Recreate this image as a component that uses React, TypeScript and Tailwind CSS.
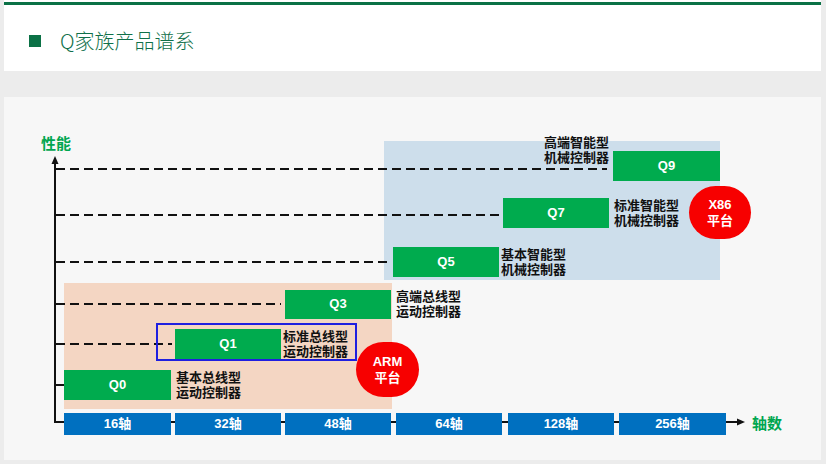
type Row = {
  name: string;
  row: string;
  dash: string;
  bar: string;
  note: string;
  line1: string;
  line2: string;
  solid?: boolean;
  above?: boolean;
};

// product levels from top (highest performance) to bottom
const rows: Row[] = [
  { name: "Q9", row: "", dash: "w-[551px] mt-[6px]", bar: "ml-[6px] w-[107px] h-[30px]", note: "", line1: "高端智能型", line2: "机械控制器", above: true },
  { name: "Q7", row: "mt-[17px]", dash: "w-[443px] mt-[4px]", bar: "ml-[4px] w-[106px] h-[30px]", note: "ml-[5px]", line1: "标准智能型", line2: "机械控制器" },
  { name: "Q5", row: "mt-[19px]", dash: "w-[333px]", bar: "ml-[4px] w-[106px] h-[30px]", note: "ml-[2px]", line1: "基本智能型", line2: "机械控制器" },
  { name: "Q3", row: "mt-[12px]", dash: "w-[225px]", bar: "ml-[4px] w-[106px] h-[29px]", note: "ml-[5px]", line1: "高端总线型", line2: "运动控制器" },
  { name: "Q1", row: "mt-[10px]", dash: "w-[116px]", bar: "ml-[3px] w-[106px] h-[30px]", note: "ml-[2px]", line1: "标准总线型", line2: "运动控制器" },
  { name: "Q0", row: "mt-[11px]", dash: "w-[8px]", bar: "w-[107px] h-[30px]", note: "ml-[5px]", line1: "基本总线型", line2: "运动控制器", solid: true },
];

const axes = [
  { label: "16轴", cls: "w-[107px]" },
  { label: "32轴", cls: "ml-[4px] w-[106px]" },
  { label: "48轴", cls: "ml-[4px] w-[106px]" },
  { label: "64轴", cls: "ml-[5px] w-[106px]" },
  { label: "128轴", cls: "ml-[6px] w-[106px]" },
  { label: "256轴", cls: "ml-[5px] w-[107px]" },
];

const Guide = ({ cls, solid }: { cls: string; solid?: boolean }) => (
  <svg className={`${cls} h-[2px] flex-none`}>
    <line x1="0" y1="1" x2="100%" y2="1" stroke="#111" strokeWidth="2" strokeDasharray={solid ? undefined : "9 5"} />
  </svg>
);

const Note = ({ a, b, cls }: { a: string; b: string; cls: string }) => (
  <p className={`${cls} whitespace-nowrap text-left text-[13px] leading-[15px] font-bold text-[#111]`}>
    {a}
    <br />
    {b}
  </p>
);

const App = () => {
  return (
    <div className='w-[826px] h-[464px] bg-[#ececec] overflow-hidden [font-family:"Liberation_Sans","Noto_Sans_CJK_SC",sans-serif]'>
      {/* header card */}
      <div className="ml-1 w-[817px] h-[71px] bg-white pt-[2px]">
        <div className="h-[3px] bg-[#0b7146]" />
        <div className="flex items-center pl-[25px] pt-[24px]">
          <div className="w-3 h-3 bg-[#0b7146]" />
          <h1 className='ml-[19px] text-[20px] leading-6 font-light text-[#10704a] [font-family:"Noto_Sans_CJK_SC",sans-serif]'>
            Q家族产品谱系
          </h1>
        </div>
      </div>

      {/* chart panel */}
      <div className="relative isolate mt-[26px] ml-1 w-[817px] h-[363px] bg-[#f7f7f7] pl-[52px] pt-[54px] flex flex-col">
        {/* platform regions */}
        <div className="absolute -z-10 left-[380px] top-[44px] w-[336px] h-[139px] bg-[#cddeeb]" />
        <div className="absolute -z-10 left-[60px] top-[186px] w-[328px] h-[126px] bg-[#f4d6c3]" />

        {/* axes */}
        <svg className="absolute -z-10 left-0 top-0" width="817" height="363" viewBox="0 0 817 363">
          <line x1="51" y1="64" x2="51" y2="326" stroke="#111" strokeWidth="2" />
          <polygon points="51,59 47.5,67 54.5,67" fill="#111" />
          <line x1="50" y1="325" x2="734" y2="325" stroke="#111" strokeWidth="2" />
          <polygon points="741,325 733,321.5 733,328.5" fill="#111" />
        </svg>

        <div className="absolute left-[37px] top-[37px] text-[15px] leading-5 font-bold text-[#00a650]">性能</div>

        {/* product levels */}
        {rows.map((r) => (
          <div key={r.name} className={`flex items-center ${r.row}`}>
            <Guide cls={r.dash} solid={r.solid} />
            <div className={`relative ${r.bar} bg-[#00ab4e] flex items-center justify-center text-white text-[13px] font-bold`}>
              {r.name}
              {r.above && <Note a={r.line1} b={r.line2} cls="absolute right-full mr-[4px] bottom-[16px]" />}
            </div>
            {!r.above && <Note a={r.line1} b={r.line2} cls={r.note} />}
          </div>
        ))}

        {/* axis labels */}
        <div className="mt-[13px] ml-[8px] flex items-center">
          {axes.map((a) => (
            <div key={a.label} className={`${a.cls} h-[22px] bg-[#0070c0] flex items-center justify-center text-white text-[13px] font-bold`}>
              {a.label}
            </div>
          ))}
          <span className="ml-[26px] text-[15px] leading-5 font-bold text-[#00a650]">轴数</span>
        </div>

        {/* highlight frame around Q1 */}
        <div className="absolute left-[152px] top-[226px] w-[201px] h-[38px] border-2 border-[#1f1fe0]" />

        {/* platform badges */}
        <div className="absolute left-[352px] top-[245px] w-[63px] h-[55px] rounded-full bg-[#f70000] flex flex-col items-center justify-center text-white text-[13px] leading-4 font-bold">
          <span>ARM</span>
          <span>平台</span>
        </div>
        <div className="absolute left-[685px] top-[89px] w-[62px] h-[53px] rounded-full bg-[#f70000] flex flex-col items-center justify-center text-white text-[13px] leading-4 font-bold">
          <span>X86</span>
          <span>平台</span>
        </div>
      </div>
    </div>
  );
};

export default App;
